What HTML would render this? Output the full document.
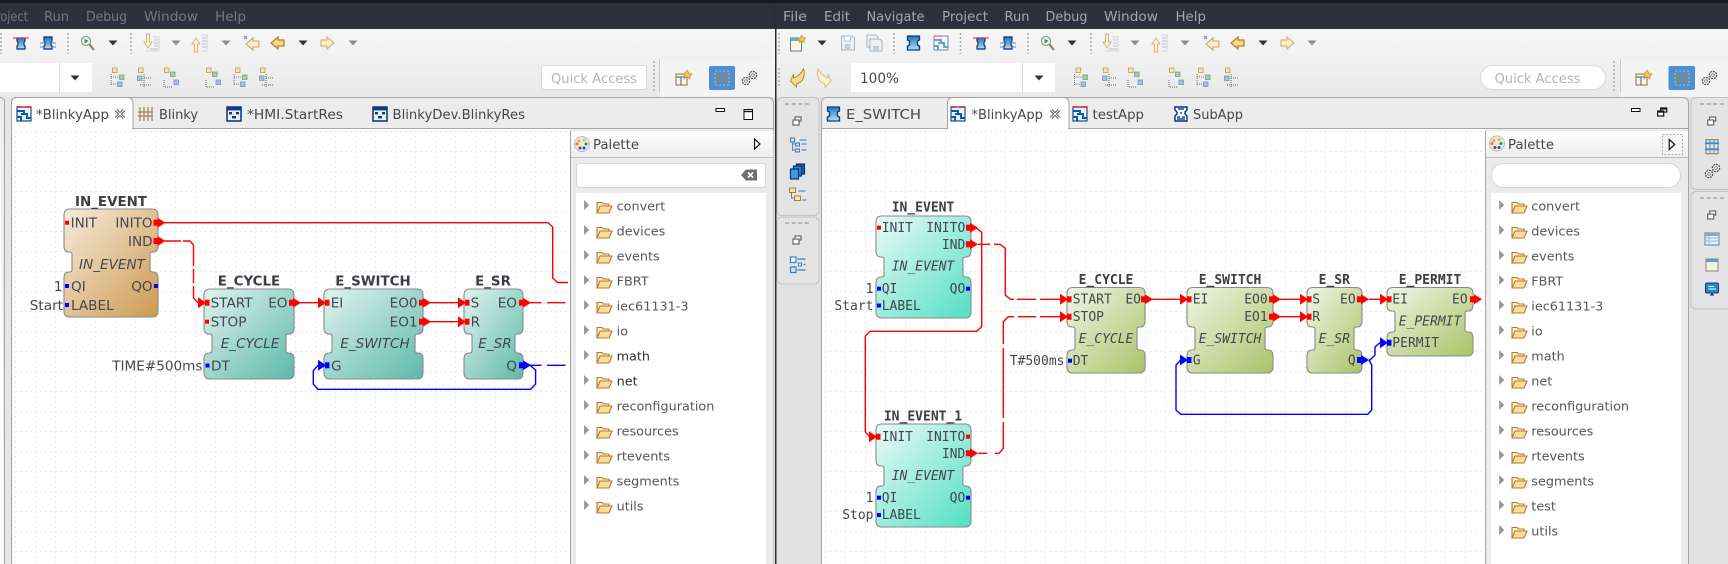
<!DOCTYPE html>
<html><head><meta charset="utf-8"><title>4diac IDE</title>
<style>
html,body{margin:0;padding:0;background:#e2e2e2;width:1728px;height:564px;overflow:hidden}
svg{display:block}
text{font-family:"DejaVu Sans","Liberation Sans",sans-serif}
.menu{font-size:13.3px;fill:#a4a6ab}
.menuL{font-size:13.3px;fill:#75787f}
.tab{font-size:13px;fill:#44474c}
.qa{font-size:13.3px;fill:#b1b4b8}
.pal{font-size:12.8px;fill:#54575c}
.palb{font-size:12.8px;fill:#303236}
.d{font-size:13.6px;fill:#45474e}
.di{font-size:13.6px;fill:#45474e;font-style:italic}
.dt{font-size:13.4px;fill:#3c3e45;font-weight:bold}
.m{font-family:"DejaVu Sans Mono","Liberation Mono",monospace;font-size:13px;fill:#45474e}
.mi{font-family:"DejaVu Sans Mono","Liberation Mono",monospace;font-size:13px;fill:#45474e;font-style:italic}
.mt{font-family:"DejaVu Sans Mono","Liberation Mono",monospace;font-size:13px;fill:#3c3e45;font-weight:bold}
</style></head><body>
<svg width="1728" height="564" viewBox="0 0 1728 564" xmlns="http://www.w3.org/2000/svg">
<defs>
<linearGradient id="tb" x1="0" y1="0" x2="0" y2="1"><stop offset="0" stop-color="#f6f6f6"/><stop offset="1" stop-color="#e9e9e9"/></linearGradient>
<linearGradient id="ph" x1="0" y1="0" x2="0" y2="1"><stop offset="0" stop-color="#ffffff"/><stop offset="1" stop-color="#eeeeee"/></linearGradient>
<linearGradient id="gOr" x1="0" y1="0" x2="1" y2="1"><stop offset="0" stop-color="#f6ebdd"/><stop offset="1" stop-color="#cd9a50"/></linearGradient>
<linearGradient id="gTe" x1="0" y1="0" x2="1" y2="1"><stop offset="0" stop-color="#e2f3ef"/><stop offset="1" stop-color="#5cb9a9"/></linearGradient>
<linearGradient id="gAq" x1="0" y1="0" x2="1" y2="1"><stop offset="0" stop-color="#eafaf6"/><stop offset="1" stop-color="#52dfc3"/></linearGradient>
<linearGradient id="gOl" x1="0" y1="0" x2="1" y2="1"><stop offset="0" stop-color="#f1f4e7"/><stop offset="1" stop-color="#a9c467"/></linearGradient>
<linearGradient id="gB" x1="0" y1="0" x2="0" y2="1"><stop offset="0" stop-color="#1f78c4"/><stop offset="1" stop-color="#b9dcf4"/></linearGradient>
<pattern id="gridL" x="15" y="11" width="20" height="20" patternUnits="userSpaceOnUse"><path d="M0 .5H20M.5 0V20" stroke="#e6e6e6" stroke-width="1" stroke-dasharray="2 3" fill="none"/></pattern>
<pattern id="gridR" x="5" y="11" width="20" height="20" patternUnits="userSpaceOnUse"><path d="M0 .5H20M.5 0V20" stroke="#e6e6e6" stroke-width="1" stroke-dasharray="2 3" fill="none"/></pattern>

<g id="ao"><rect x="0" y="-3" width="5" height="6"/><path d="M4-5L12 0L4 5z"/></g>
<g id="ai"><path d="M0-5.5L8 0L0 5.5z"/><rect x="7" y="-3" width="4.5" height="6"/></g>

<g id="tri"><path d="M-2.5-5L2.5 0L-2.5 5z" fill="#93969a"/></g>
<g id="fld"><path d="M-7 6V-4.5H-2L-.5-3H5V-1" fill="#fbeecb" stroke="#b5782f" stroke-width="1.1"/><path d="M-7 6L-4-1H8L5 6z" fill="#f9dd9d" stroke="#b5782f" stroke-width="1.1"/></g>
<g id="ddk"><path d="M-4.5-2.5H4.5L0 2.5z" fill="#333"/></g>
<g id="ddg"><path d="M-4.5-2.5H4.5L0 2.5z" fill="#8b8d90"/></g>
<g id="fb"><path d="M-6-7H6V-3L4-2V2L6 3V7H-6V3L-4 2V-2L-6-3z" fill="url(#gB)" stroke="#0b3b78" stroke-width="1.3"/></g>
<g id="fb1"><path d="M-4-5H4V-2L3-1V2L4 3V6H-4V3L-3 2V-1L-4-2z" fill="url(#gB)" stroke="#0b2f72" stroke-width="1.2"/><path d="M-8-5H8" stroke="#e33" stroke-width="1.1"/></g>
<g id="fb2"><path d="M-4-6H4V-2L3-1V2L4 3V6H-4V3L-3 2V-1L-4-2z" fill="url(#gB)" stroke="#0b2f72" stroke-width="1.2"/><path d="M-8 0H-4M4 0H8M-8 4H-4M4 4H8" stroke="#2a8fdc" stroke-width="1.1"/></g>
<g id="app"><rect x="-7" y="-7" width="14" height="14" fill="#e8f2fa" stroke="#0b3b78" stroke-width="1.1"/><path d="M-7-3H0V0M-3 0H3V4H7M-7 3H-3V7" stroke="#0b5aa8" stroke-width="2" fill="none"/><path d="M-7.5-7H-2M1-7H7.5" stroke="#e11" stroke-width="1.6"/></g>
<g id="app2"><rect x="-7" y="-7" width="14" height="14" fill="#f1f6fb" stroke="#6b8fb5"/><path d="M-7-3H0V0M-3 0H3V4H7M-7 3H-3V7" stroke="#5d93c5" stroke-width="1.8" fill="none"/><path d="M-7-7H1" stroke="#e55" stroke-width="1.2"/></g>
<g id="sub"><path d="M-6-7H6V-4L4-2V0L6 2V7H-6V2L-4 0V-2L-6-4z" fill="#fff" stroke="#0b2f72" stroke-width="1.4"/><path d="M-3-5H3M-1-1H1M-4 3H-1M1 3H4M-4 5H4" stroke="#114a9b" stroke-width="1.6"/></g>
<g id="hmi"><rect x="-7" y="-7" width="14" height="14" fill="#e8f0f8" stroke="#0b2f72" stroke-width="1.5"/><rect x="-7" y="-7" width="14" height="3.4" fill="#123a80"/><rect x="-5" y="-2" width="3" height="2.4" fill="#123a80"/><rect x="2" y="-2" width="3" height="2.4" fill="#123a80"/><rect x="-2" y="2" width="4" height="2.4" fill="#123a80"/></g>
<g id="res"><path d="M-5-7V7M-1-7V7M3-7V7M7-7V7M-7-2H8M-7 2H8" stroke="#a58f72" stroke-width="1.4"/></g>
<g id="srch"><circle cx="-2" cy="-2" r="4.5" fill="#eef4ee" stroke="#8a8f94" stroke-width="1.1"/><path d="M-3.5-4.5L.5-2L-3.5.5z" fill="#2fa34a"/><path d="M1.5 1.5L6 7" stroke="#8c7a5d" stroke-width="2"/></g>
<g id="nxt"><path d="M-4.5-9H-1.5V-1H1L-3 5L-7-1H-4.5z" fill="#fbf0d4" stroke="#d2b37c"/><path d="M2-6H8V8H-5" fill="none" stroke="#cfd5dc"/><path d="M3-3H7M3 0H7M3 3H7M-1 6H7" stroke="#b9c2cb"/></g>
<g id="prv"><path d="M-4.5 9H-1.5V1H1L-3-5L-7 1H-4.5z" fill="#fbf0d4" stroke="#d2b37c"/><path d="M2-8H8V8H3" fill="none" stroke="#cfd5dc"/><path d="M3-5H7M3-2H7M3 1H7M3 4H7" stroke="#b9c2cb"/></g>
<g id="lft"><path d="M-7 0L0-6V-3H6V3H0V6z" fill="#f5d98a" stroke="#b5821a" stroke-width="1.2"/></g>
<g id="lft2"><path d="M-5 1L2-5V-2H8V4H2V7z" fill="#fbedc7" stroke="#c9a35f"/><path d="M-7-7L-4-4M-4-7L-7-4" stroke="#7a8ea3" stroke-width="1.2"/></g>
<g id="rgt"><path d="M7 0L0-6V-3H-6V3H0V6z" fill="#fbedc7" stroke="#d2b47a" stroke-width="1.2"/></g>
<g id="new"><rect x="-7" y="-5" width="11" height="13" fill="#fdf6d8" stroke="#5b7ea5"/><rect x="-7" y="-5" width="11" height="3" fill="#7aa6d2"/><path d="M4-8L5.5-5.5L8-5L6.5-3L7-.5L4-2L1.5-.5L2-3L.5-5L3-5.5z" fill="#f0c454" stroke="#b8892a" stroke-width=".6"/></g>
<g id="sav"><path d="M-6-7H5L7-5V7H-6z" fill="#eef2f7" stroke="#a3b4c6"/><rect x="-3" y="-7" width="6" height="5" fill="#fff" stroke="#b4c2d0"/><rect x="-3" y="1" width="6" height="6" fill="#c2cfdc"/></g>
<g id="sava"><path d="M-7-8H2L4-6V-4H-4V4H-7z" fill="#eef2f7" stroke="#a3b4c6"/><path d="M-4-4H6L8-2V8H-4z" fill="#eef2f7" stroke="#a3b4c6"/><rect x="-1" y="3" width="6" height="5" fill="#c2cfdc"/></g>
<g id="und"><path d="M6-9C8-3 6 4-1 6V9L-7 3L-4-4V0C0-1 3-4 6-9z" fill="#f7dc91" stroke="#b98a24"/></g>
<g id="red"><path d="M-6-9C-8-3-6 4 1 6V9L7 3L4-4V0C0-1-3-4-6-9z" fill="#fbf0d2" stroke="#d6bd85"/></g>
<g id="a1"><rect x="-5.5" y="-9" width="4.5" height="4.5" fill="#f5e6b8" stroke="#b89a55" stroke-width=".8"/><rect x="1.5" y="-2" width="4.5" height="4.5" fill="#aac9a6" stroke="#7fa07c" stroke-width=".8"/><rect x="-.5" y="5" width="4.5" height="4.5" fill="#a9bcdc" stroke="#7e93b9" stroke-width=".8"/><path d="M-7 0H0M-7 7H-2M-7-3V9" stroke="#777" stroke-dasharray="1 1"/></g>
<g id="a2"><rect x="-5.5" y="-9" width="4.5" height="4.5" fill="#f5e6b8" stroke="#b89a55" stroke-width=".8"/><rect x="-6.5" y="-1" width="4.5" height="4.5" fill="#a9bcdc" stroke="#7e93b9" stroke-width=".8"/><path d="M0 1H7M-4 8H7M0-3V10" stroke="#666" stroke-dasharray="1 1"/></g>
<g id="a3"><rect x="-6.5" y="-9" width="4.5" height="4.5" fill="#f5e6b8" stroke="#b89a55" stroke-width=".8"/><rect x="-.5" y="-5" width="4.5" height="4.5" fill="#aac9a6" stroke="#7fa07c" stroke-width=".8"/><rect x="3" y="3" width="4.5" height="4.5" fill="#a9bcdc" stroke="#7e93b9" stroke-width=".8"/><path d="M-7 3V10H2" stroke="#666" stroke-dasharray="1 1" fill="none"/></g>
<g id="persp"><rect x="-6" y="-4" width="11" height="11" fill="#fdf6e0" stroke="#8c6f3f"/><path d="M-6-1H5M-1-1V7" stroke="#4c7fb2" stroke-width="1.2"/><path d="M5-8L7-5L10-4L8-2L8 1L5-1L2 1L3-2L1-4L3-5z" fill="#f0c454" stroke="#b8892a" stroke-width=".6"/></g>
<g id="grn"><rect x="-7" y="-7" width="14" height="14" fill="none" stroke="#d8b46a" stroke-dasharray="2 2"/><path d="M-8-2H8M-8 2H8" stroke="#a8853f"/><path d="M-3-7V7M3-7V7" stroke="#a8853f" stroke-dasharray="2 1"/></g>
<g id="gear"><circle cx="-3" cy="3" r="3.6" fill="#fff" stroke="#555" stroke-width="1.4" stroke-dasharray="2 .8"/><circle cx="-3" cy="3" r="1.3" fill="#fff" stroke="#555" stroke-width=".7"/><circle cx="4" cy="-3" r="3.6" fill="#fff" stroke="#555" stroke-width="1.4" stroke-dasharray="2 .8"/><circle cx="4" cy="-3" r="1.3" fill="#fff" stroke="#555" stroke-width=".7"/></g>
<g id="rest"><rect x="-2" y="-4" width="6" height="4" fill="#fff" stroke="#666" stroke-width="1.2"/><rect x="-4" y="-1" width="6" height="5" fill="#fff" stroke="#666" stroke-width="1.2"/></g>
<g id="palI"><circle r="7.5" fill="#e6ecf2" stroke="#b4bcc6"/><circle cx="-3" cy="-3" r="1.5" fill="#f0b400"/><circle cx="2" cy="-4" r="1.5" fill="#d8c800"/><circle cx="4" cy="0" r="1.5" fill="#1c9a2e"/><circle cx="2" cy="4" r="1.5" fill="#1a50c8"/><circle cx="-2" cy="4" r="1.5" fill="#d02020"/><circle cx="-5" cy="0" r="1.5" fill="#f08000"/></g>
<g id="flyo"><path d="M-2.5-5L3 0L-2.5 5z" fill="#fff" stroke="#111" stroke-width="1.2"/></g>
<g id="d4"><path d="M0 0H26" stroke="#b5b5b5" stroke-width="2" stroke-dasharray="4 2.6"/></g>
<g id="cls"><path d="M-4-4L4 4M4-4L-4 4" stroke="#4c4c4c" stroke-width="3"/><path d="M-4-4L4 4M4-4L-4 4" stroke="#fff" stroke-width="1.2"/></g>
</defs>

<!-- base -->
<rect width="1728" height="564" fill="#e2e2e2"/>
<rect y="29" width="1728" height="68" fill="url(#tb)"/>
<rect width="1728" height="3" fill="#15181c"/>
<rect y="3" width="1728" height="26" fill="#2e313b"/>
<rect x="660" y="59" width="115" height="38" fill="#f4f4f4"/><path d="M659.5 59V92" stroke="#c9c9c9"/>
<rect x="1621" y="59" width="107" height="38" fill="#f4f4f4"/><path d="M1620.5 59V92" stroke="#c9c9c9"/>

<!-- menu -->
<text class="menuL" x="-4" y="21" textLength="32" lengthAdjust="spacingAndGlyphs">roject</text>
<text class="menuL" x="44" y="21" textLength="25" lengthAdjust="spacingAndGlyphs">Run</text>
<text class="menuL" x="86" y="21" textLength="41" lengthAdjust="spacingAndGlyphs">Debug</text>
<text class="menuL" x="144" y="21" textLength="54" lengthAdjust="spacingAndGlyphs">Window</text>
<text class="menuL" x="215" y="21" textLength="31" lengthAdjust="spacingAndGlyphs">Help</text>
<text class="menu" x="783" y="21" textLength="24" lengthAdjust="spacingAndGlyphs">File</text>
<text class="menu" x="824" y="21" textLength="26" lengthAdjust="spacingAndGlyphs">Edit</text>
<text class="menu" x="866.5" y="21" textLength="58" lengthAdjust="spacingAndGlyphs">Navigate</text>
<text class="menu" x="942" y="21" textLength="46" lengthAdjust="spacingAndGlyphs">Project</text>
<text class="menu" x="1004.5" y="21" textLength="25" lengthAdjust="spacingAndGlyphs">Run</text>
<text class="menu" x="1045.5" y="21" textLength="42" lengthAdjust="spacingAndGlyphs">Debug</text>
<text class="menu" x="1104" y="21" textLength="54" lengthAdjust="spacingAndGlyphs">Window</text>
<text class="menu" x="1175.5" y="21" textLength="30.5" lengthAdjust="spacingAndGlyphs">Help</text>

<!-- separators -->
<g stroke="#a9a9a9" stroke-width="1.5" stroke-dasharray="2 2" fill="none">
<path d="M1 33V54M68 33V54M131 33V54M779 33V54M894 33V54M960.5 33V54M1028 33V54M1091 33V54M654 61V92M779 68V88M1614 61V92"/>
</g>

<!-- left toolbar -->
<use href="#fb1" x="21" y="43"/><use href="#fb2" x="48" y="43"/>
<use href="#srch" x="88" y="43"/><use href="#ddk" x="113" y="43"/>
<use href="#nxt" x="151" y="43"/><use href="#ddg" x="176" y="43"/>
<use href="#prv" x="199" y="43"/><use href="#ddg" x="226" y="43"/>
<use href="#lft2" x="251" y="43"/><use href="#lft" x="278" y="43"/><use href="#ddk" x="303" y="43"/>
<use href="#rgt" x="327" y="43"/><use href="#ddg" x="353" y="43"/>
<rect x="0" y="63" width="92" height="29" fill="#fff"/><path d="M59.5 63V92" stroke="#d5dbe2"/><use href="#ddk" x="75" y="78"/>
<use href="#a1" x="118" y="77"/><use href="#a2" x="144" y="77"/><use href="#a3" x="171" y="77"/>
<use href="#a3" x="213" y="77"/><use href="#a1" x="241" y="77"/><use href="#a2" x="266" y="77"/>
<rect x="541.5" y="65.5" width="105" height="24" rx="3" fill="#fff" stroke="#d3d8e3"/>
<text class="qa" x="551" y="83" textLength="86" lengthAdjust="spacingAndGlyphs">Quick Access</text>
<use href="#persp" x="682" y="78"/>
<rect x="709" y="66" width="26" height="24" rx="2" fill="#4a90d9"/><use href="#grn" x="722" y="78"/>
<use href="#gear" x="749" y="78"/>

<!-- right toolbar -->
<use href="#new" x="797.5" y="43"/><use href="#ddk" x="822" y="43"/>
<use href="#sav" x="847.5" y="43"/><use href="#sava" x="874" y="43"/>
<use href="#fb" x="913.5" y="43"/><use href="#app2" x="941" y="43"/>
<use href="#fb1" x="981" y="43"/><use href="#fb2" x="1008" y="43"/>
<use href="#srch" x="1048" y="43"/><use href="#ddk" x="1072" y="43"/>
<use href="#nxt" x="1110" y="43"/><use href="#ddg" x="1135" y="43"/>
<use href="#prv" x="1159" y="43"/><use href="#ddg" x="1185" y="43"/>
<use href="#lft2" x="1211" y="43"/><use href="#lft" x="1238" y="43"/><use href="#ddk" x="1263" y="43"/>
<use href="#rgt" x="1287" y="43"/><use href="#ddg" x="1312" y="43"/>
<use href="#und" x="797.5" y="78"/><use href="#red" x="824" y="78"/>
<rect x="851" y="63" width="204" height="29" fill="#fff"/><path d="M1022.5 63V92" stroke="#d5dbe2"/><use href="#ddk" x="1039" y="78"/>
<text class="tab" x="860" y="83" textLength="39" lengthAdjust="spacingAndGlyphs" style="font-size:14px">100%</text>
<use href="#a1" x="1081.5" y="77"/><use href="#a2" x="1109" y="77"/><use href="#a3" x="1135" y="77"/>
<use href="#a3" x="1176" y="77"/><use href="#a1" x="1204" y="77"/><use href="#a2" x="1231" y="77"/>
<rect x="1480.5" y="65.5" width="125" height="24" rx="12" fill="#fff" stroke="#d3d8e3"/>
<text class="qa" x="1494.5" y="83" textLength="86" lengthAdjust="spacingAndGlyphs">Quick Access</text>
<use href="#persp" x="1642" y="78"/>
<rect x="1668.5" y="66" width="26.5" height="24" rx="2" fill="#4a90d9"/><use href="#grn" x="1682" y="78"/>
<use href="#gear" x="1709" y="78"/>

<!-- left window frame -->
<rect x="0" y="97" width="4.5" height="467" fill="#fff"/>
<path d="M0 97.5H0.5Q4.5 97.5 4.5 103V564" fill="#ededed" stroke="#a5a5a5"/>
<rect x="5" y="97" width="6" height="467" fill="#e6e6e6"/>
<path d="M11.5 564V103.5q0-6 6-6H767.5q6 0 6 6V564z" fill="#ececec" stroke="#a5a5a5"/>
<rect x="12" y="129" width="559" height="435" fill="#fff"/>
<rect x="12" y="129" width="559" height="435" fill="url(#gridL)"/>
<path d="M12 128.5H773" stroke="#a8a8a8"/>
<path d="M11.5 129V103.5q0-6 6-6H127q6 0 6 6V129z" fill="#fff" stroke="#a5a5a5"/>
<path d="M12 129H132" stroke="#fff" stroke-width="2"/>
<use href="#app" x="24" y="114"/>
<text class="tab" x="36" y="119" textLength="73" lengthAdjust="spacingAndGlyphs">*BlinkyApp</text>
<use href="#cls" x="120" y="114"/>
<use href="#res" x="145" y="114"/>
<text class="tab" x="159" y="119" textLength="39" lengthAdjust="spacingAndGlyphs">Blinky</text>
<use href="#hmi" x="234" y="114"/>
<text class="tab" x="247" y="119" textLength="96" lengthAdjust="spacingAndGlyphs">*HMI.StartRes</text>
<use href="#hmi" x="380" y="114"/>
<text class="tab" x="392.5" y="119" textLength="132.5" lengthAdjust="spacingAndGlyphs">BlinkyDev.BlinkyRes</text>
<rect x="716" y="108.5" width="8.5" height="3" fill="#fff" stroke="#111"/>
<rect x="744" y="109.5" width="8.5" height="10" fill="#fff" stroke="#111"/><path d="M744 111.5H752.5" stroke="#111" stroke-width="1.4"/>

<!-- left diagram wires -->
<g fill="none" stroke-width="1.4">
<path d="M165 222.7H548L552.7 227V278L557.5 282.5H568" stroke="#f00"/>
<path d="M165 241H181M183 241H190L193.5 245V266M193.5 269V283M193.5 286V298L198 302.7" stroke="#f00"/>
<path d="M300 302.7H320M430 302.7H460M430 321.7H460" stroke="#f00"/>
<path d="M530 302.7H541.5M547 302.7H565.5" stroke="#f00"/>
<path d="M530 365.3H541.5M547 365.3H565.5" stroke="#00f"/>
<path d="M530 365.3L535.6 370V384L530.6 389.3H318L313.3 384V370.6L318 365.3" stroke="#00f"/>
</g>

<!-- left blocks -->
<g stroke="#8a8a8a" stroke-width="1.1">
<path fill="url(#gOr)" d="M70 209H152q6 0 6 6V246q0 6-5 6q-3 0-3 2V270q0 2 3 2q5 0 5 6V311q0 6-6 6H70q-6 0-6-6V278q0-6 5-6q3 0 3-2V254q0-2-3-2q-5 0-5-6V215q0-6 6-6z"/>
<path fill="url(#gTe)" d="M210 289H288q6 0 6 6V328q0 6-5 6q-3 0-3 2V351q0 2 3 2q5 0 5 6V373q0 6-6 6H210q-6 0-6-6V359q0-6 5-6q3 0 3-2V336q0-2-3-2q-5 0-5-6V295q0-6 6-6z"/>
<path fill="url(#gTe)" d="M330 289H417q6 0 6 6V328q0 6-5 6q-3 0-3 2V351q0 2 3 2q5 0 5 6V373q0 6-6 6H330q-6 0-6-6V359q0-6 5-6q3 0 3-2V336q0-2-3-2q-5 0-5-6V295q0-6 6-6z"/>
<path fill="url(#gTe)" d="M470 289H517q6 0 6 6V328q0 6-5 6q-3 0-3 2V351q0 2 3 2q5 0 5 6V373q0 6-6 6H470q-6 0-6-6V359q0-6 5-6q3 0 3-2V336q0-2-3-2q-5 0-5-6V295q0-6 6-6z"/>
</g>

<!-- left block text -->
<text class="dt" x="111" y="206" text-anchor="middle">IN_EVENT</text>
<text class="d" x="70.6" y="227.5">INIT</text>
<text class="d" x="152.6" y="227.5" text-anchor="end">INITO</text>
<text class="d" x="152.6" y="246" text-anchor="end">IND</text>
<text class="di" x="112" y="269" text-anchor="middle">IN_EVENT</text>
<text class="d" x="71" y="291">QI</text>
<text class="d" x="152.6" y="291" text-anchor="end">QO</text>
<text class="d" x="71" y="310">LABEL</text>
<text class="d" x="62.5" y="291" text-anchor="end">1</text>
<text class="d" x="63" y="310" text-anchor="end">Start</text>

<text class="dt" x="249" y="285.5" text-anchor="middle">E_CYCLE</text>
<text class="d" x="210.6" y="307.5">START</text>
<text class="d" x="287.5" y="307.5" text-anchor="end">EO</text>
<text class="d" x="210.6" y="326.5">STOP</text>
<text class="di" x="250" y="348" text-anchor="middle">E_CYCLE</text>
<text class="d" x="211" y="370.5">DT</text>
<text class="d" x="202.5" y="370.5" text-anchor="end">TIME#500ms</text>

<text class="dt" x="373" y="285.5" text-anchor="middle">E_SWITCH</text>
<text class="d" x="330.7" y="307.5">EI</text>
<text class="d" x="417.6" y="307.5" text-anchor="end">EO0</text>
<text class="d" x="417.6" y="326.5" text-anchor="end">EO1</text>
<text class="di" x="375" y="348" text-anchor="middle">E_SWITCH</text>
<text class="d" x="331" y="370.5">G</text>

<text class="dt" x="493" y="285.5" text-anchor="middle">E_SR</text>
<text class="d" x="470.6" y="307.5">S</text>
<text class="d" x="470.6" y="326.5">R</text>
<text class="d" x="517" y="307.5" text-anchor="end">EO</text>
<text class="di" x="495" y="348" text-anchor="middle">E_SR</text>
<text class="d" x="517" y="370.5" text-anchor="end">Q</text>

<!-- left ports -->
<g fill="#f00">
<rect x="65" y="220.7" width="4" height="4"/>
<rect x="205" y="319.7" width="4" height="4"/>
<use href="#ao" x="153.5" y="222.7"/><use href="#ao" x="153.5" y="241"/>
<use href="#ai" x="198" y="302.7"/><use href="#ao" x="289" y="302.7"/>
<use href="#ai" x="318" y="302.7"/><use href="#ao" x="419" y="302.7"/><use href="#ao" x="419" y="321.7"/>
<use href="#ai" x="458" y="302.7"/><use href="#ai" x="458" y="321.7"/>
<use href="#ao" x="519" y="302.7"/>
</g>
<g fill="#00f">
<rect x="65" y="284" width="4" height="4"/><rect x="65" y="303" width="4" height="4"/><rect x="154" y="284" width="4" height="4"/>
<rect x="205.5" y="363.5" width="4" height="4"/>
<use href="#ai" x="318" y="365.3"/><use href="#ao" x="519" y="365.3"/>
</g>

<!-- left palette -->
<rect x="570.5" y="130.5" width="203" height="434" fill="#ebebeb"/>
<rect x="571" y="131" width="202" height="26" fill="url(#ph)"/>
<path d="M570.5 130.5V564" stroke="#a5a5a5" fill="none"/><path d="M571 157.5H773" stroke="#bdbdbd"/>
<use href="#palI" x="582" y="144"/>
<text class="tab" x="593" y="149" textLength="46" lengthAdjust="spacingAndGlyphs">Palette</text>
<use href="#flyo" x="757" y="144"/>
<rect x="576.5" y="163.5" width="189" height="24" rx="3" fill="#fff" stroke="#d3d8e3"/>
<path d="M741 175L746 169.5H757V180.5H746z" fill="#6d6f72"/><path d="M748 172.5L753 177.5M753 172.5L748 177.5" stroke="#fff" stroke-width="1.6"/>
<rect x="576" y="193" width="190" height="371" fill="#fff"/>
<g>
<use href="#tri" x="586.6" y="205"/><use href="#fld" x="604" y="207"/><text class="pal" x="616.6" y="210.7">convert</text>
<use href="#tri" x="586.6" y="230"/><use href="#fld" x="604" y="232"/><text class="pal" x="616.6" y="235.7">devices</text>
<use href="#tri" x="586.6" y="255"/><use href="#fld" x="604" y="257"/><text class="pal" x="616.6" y="260.7">events</text>
<use href="#tri" x="586.6" y="280"/><use href="#fld" x="604" y="282"/><text class="pal" x="616.6" y="285.7">FBRT</text>
<use href="#tri" x="586.6" y="305"/><use href="#fld" x="604" y="307"/><text class="pal" x="616.6" y="310.7">iec61131-3</text>
<use href="#tri" x="586.6" y="330"/><use href="#fld" x="604" y="332"/><text class="pal" x="616.6" y="335.7">io</text>
<use href="#tri" x="586.6" y="355"/><use href="#fld" x="604" y="357"/><text class="palb" x="616.6" y="360.7">math</text>
<use href="#tri" x="586.6" y="380"/><use href="#fld" x="604" y="382"/><text class="palb" x="616.6" y="385.7">net</text>
<use href="#tri" x="586.6" y="405"/><use href="#fld" x="604" y="407"/><text class="pal" x="616.6" y="410.7">reconfiguration</text>
<use href="#tri" x="586.6" y="430"/><use href="#fld" x="604" y="432"/><text class="pal" x="616.6" y="435.7">resources</text>
<use href="#tri" x="586.6" y="455"/><use href="#fld" x="604" y="457"/><text class="pal" x="616.6" y="460.7">rtevents</text>
<use href="#tri" x="586.6" y="480"/><use href="#fld" x="604" y="482"/><text class="pal" x="616.6" y="485.7">segments</text>
<use href="#tri" x="586.6" y="505"/><use href="#fld" x="604" y="507"/><text class="pal" x="616.6" y="510.7">utils</text>
</g>

<!-- window divider -->
<rect x="775" y="3" width="1.5" height="561" fill="#2b2d33"/>
<rect x="776.5" y="97" width="45" height="467" fill="#e2e2e2"/>

<!-- middle trim -->
<rect x="777" y="97.5" width="42" height="118" rx="5" fill="#e4e4e4" stroke="#c2c2c2"/>
<rect x="777" y="217" width="42" height="67" rx="5" fill="#e4e4e4" stroke="#c2c2c2"/>
<use href="#d4" x="785" y="104"/><use href="#d4" x="785" y="223"/>
<use href="#rest" x="797" y="121"/><use href="#rest" x="797" y="240"/>
<g transform="translate(797.5 146)"><path d="M-5-6V5M-5-2H-1M-5 4H-1" stroke="#5a87b8" fill="none"/><rect x="-7" y="-8" width="4" height="4" fill="#cfe0f0" stroke="#3d78b5"/><rect x="-2" y="-3" width="4" height="3" fill="#cfe0f0" stroke="#3d78b5"/><rect x="-2" y="3" width="4" height="3" fill="#cfe0f0" stroke="#3d78b5"/><path d="M2-6H9M4-2H9M4 4H9" stroke="#3d78b5"/></g>
<g transform="translate(797.5 171)"><rect x="-1" y="-7" width="8" height="10" fill="#1568b5" stroke="#0b2f72" stroke-width="1.2"/><rect x="-4" y="-5" width="8" height="10" fill="#2b86cf" stroke="#0b2f72" stroke-width="1.2"/><rect x="-7" y="-2" width="8" height="10" fill="#3f9be0" stroke="#0b2f72" stroke-width="1.2"/></g>
<g transform="translate(797.5 195)"><rect x="-8" y="-7" width="6" height="4.5" fill="#f5e4b4" stroke="#b5782f"/><rect x="-3" y="1" width="6" height="4.5" fill="#f5e4b4" stroke="#b5782f"/><path d="M-6-2V3H-3" stroke="#777" fill="none"/><path d="M1-4H8M5 5H9" stroke="#4a8ccc" stroke-width="1.2"/></g>
<g transform="translate(797.5 265)"><rect x="-7" y="-8" width="5.5" height="5.5" fill="#fff" stroke="#2f7fc8" stroke-width="1.2"/><rect x="-7" y="2" width="5.5" height="5.5" fill="#cfe3f5" stroke="#2f7fc8" stroke-width="1.2"/><rect x="1" y="-2" width="3" height="3" fill="#fff" stroke="#2f7fc8"/><path d="M0-6H8M6-.5H8M0 5H8" stroke="#2f7fc8" stroke-width="1.2"/></g>

<!-- right editor frame -->
<path d="M821.5 564V103.5q0-6 6-6H1682.5q6 0 6 6V564z" fill="#ececec" stroke="#a5a5a5"/>
<rect x="822" y="129" width="664" height="435" fill="#fff"/>
<rect x="822" y="129" width="664" height="435" fill="url(#gridR)"/>
<path d="M822 128.5H1688" stroke="#a8a8a8"/>
<path d="M947.5 129V103.5q0-6 6-6H1063q6 0 6 6V129z" fill="#fff" stroke="#a5a5a5"/>
<path d="M948 129H1068" stroke="#fff" stroke-width="2"/>
<use href="#fb" x="833.5" y="114"/>
<text class="tab" x="846" y="119" textLength="75" lengthAdjust="spacingAndGlyphs">E_SWITCH</text>
<use href="#app" x="958" y="114"/>
<text class="tab" x="971.5" y="119" textLength="71.5" lengthAdjust="spacingAndGlyphs">*BlinkyApp</text>
<use href="#cls" x="1055" y="114"/>
<use href="#app" x="1080" y="114"/>
<text class="tab" x="1092.5" y="119" textLength="51.5" lengthAdjust="spacingAndGlyphs">testApp</text>
<use href="#sub" x="1181" y="114"/>
<text class="tab" x="1193" y="119" textLength="50" lengthAdjust="spacingAndGlyphs">SubApp</text>
<rect x="1631.5" y="108.5" width="8.5" height="3" fill="#fff" stroke="#111"/>
<g transform="translate(1661.7 112)"><rect x="-1" y="-4" width="6" height="4" fill="#fff" stroke="#111" stroke-width="1.2"/><rect x="-4" y="-1" width="6" height="5" fill="#fff" stroke="#111" stroke-width="1.2"/><path d="M-4 0H2M-1-3H5" stroke="#111" stroke-width="1.2"/></g>

<!-- right wires -->
<g fill="none" stroke-width="1.4">
<path d="M976 227.7L981.7 232.3V326.7L976.7 331.3H870L865.3 336V431.7L869.5 436.7" stroke="#f00"/>
<path d="M978 244.3H990M994 244.3H1000L1005.3 248.3V295L1010.7 299.3H1014M1017 299.3H1036M1040 299.3H1062" stroke="#f00"/>
<path d="M978 453.3H987M995 453.3H999L1003.3 448.5V422M1003.3 418V348M1003.3 344V321.7L1008.3 316.7H1014M1018 316.7H1036M1040 316.7H1062" stroke="#f00"/>
<path d="M1152 299.3H1182M1280 299.3H1302M1280 316.7H1302M1369 299.3H1382" stroke="#f00"/>
<path d="M1369 360H1370L1375 355V347L1380 342.7" stroke="#00f"/>
<path d="M1369 360L1371.7 365V410L1367.7 414.3H1180.7L1176 410V365L1180.7 360" stroke="#00f"/>
</g>

<!-- right blocks -->
<g stroke="#8a8a8a" stroke-width="1.1">
<path fill="url(#gAq)" d="M882 216H965q6 0 6 6V251q0 6-5 6q-3 0-3 2V275q0 2 3 2q5 0 5 6V312q0 6-6 6H882q-6 0-6-6V283q0-6 5-6q3 0 3-2V259q0-2-3-2q-5 0-5-6V222q0-6 6-6z"/>
<path fill="url(#gAq)" d="M882 424H965q6 0 6 6V460q0 6-5 6q-3 0-3 2V484q0 2 3 2q5 0 5 6V521q0 6-6 6H882q-6 0-6-6V492q0-6 5-6q3 0 3-2V468q0-2-3-2q-5 0-5-6V430q0-6 6-6z"/>
<path fill="url(#gOl)" d="M1073 287.5H1139q6 0 6 6V321q0 6-5 6q-3 0-3 2V348q0 2 3 2q5 0 5 6V367q0 6-6 6H1073q-6 0-6-6V356q0-6 5-6q3 0 3-2V329q0-2-3-2q-5 0-5-6V293.5q0-6 6-6z"/>
<path fill="url(#gOl)" d="M1193 287.5H1267q6 0 6 6V321q0 6-5 6q-3 0-3 2V348q0 2 3 2q5 0 5 6V367q0 6-6 6H1193q-6 0-6-6V356q0-6 5-6q3 0 3-2V329q0-2-3-2q-5 0-5-6V293.5q0-6 6-6z"/>
<path fill="url(#gOl)" d="M1313 287.5H1356q6 0 6 6V321q0 6-5 6q-3 0-3 2V348q0 2 3 2q5 0 5 6V367q0 6-6 6H1313q-6 0-6-6V356q0-6 5-6q3 0 3-2V329q0-2-3-2q-5 0-5-6V293.5q0-6 6-6z"/>
<path fill="url(#gOl)" d="M1393 287.5H1467q6 0 6 6V305q0 6-5 6q-3 0-3 2V330q0 2 3 2q5 0 5 6V350q0 6-6 6H1393q-6 0-6-6V338q0-6 5-6q3 0 3-2V313q0-2-3-2q-5 0-5-6V293.5q0-6 6-6z"/>
</g>

<!-- right text -->
<text class="mt" x="923" y="211.5" text-anchor="middle">IN_EVENT</text>
<text class="m" x="881.7" y="232">INIT</text>
<text class="m" x="965.3" y="232" text-anchor="end">INITO</text>
<text class="m" x="965.3" y="249" text-anchor="end">IND</text>
<text class="mi" x="923" y="270.5" text-anchor="middle">IN_EVENT</text>
<text class="m" x="881.7" y="293">QI</text>
<text class="m" x="965.3" y="293" text-anchor="end">QO</text>
<text class="m" x="881.7" y="310">LABEL</text>
<text class="m" x="873.5" y="293" text-anchor="end">1</text>
<text class="m" x="873.5" y="310" text-anchor="end">Start</text>

<text class="mt" x="923" y="420.5" text-anchor="middle">IN_EVENT_1</text>
<text class="m" x="881.7" y="441">INIT</text>
<text class="m" x="965.3" y="441" text-anchor="end">INITO</text>
<text class="m" x="965.3" y="458" text-anchor="end">IND</text>
<text class="mi" x="923" y="480" text-anchor="middle">IN_EVENT</text>
<text class="m" x="881.7" y="502">QI</text>
<text class="m" x="965.3" y="502" text-anchor="end">QO</text>
<text class="m" x="881.7" y="519">LABEL</text>
<text class="m" x="873.5" y="502" text-anchor="end">1</text>
<text class="m" x="873.5" y="519" text-anchor="end">Stop</text>

<text class="mt" x="1106" y="284" text-anchor="middle">E_CYCLE</text>
<text class="m" x="1072.7" y="303.7">START</text>
<text class="m" x="1141" y="303.7" text-anchor="end">EO</text>
<text class="m" x="1072.7" y="321">STOP</text>
<text class="mi" x="1106" y="343" text-anchor="middle">E_CYCLE</text>
<text class="m" x="1072.7" y="365">DT</text>
<text class="m" x="1064.5" y="365" text-anchor="end">T#500ms</text>

<text class="mt" x="1230" y="284" text-anchor="middle">E_SWITCH</text>
<text class="m" x="1192.7" y="303.7">EI</text>
<text class="m" x="1267.7" y="303.7" text-anchor="end">EO0</text>
<text class="m" x="1267.7" y="321" text-anchor="end">EO1</text>
<text class="mi" x="1230" y="343" text-anchor="middle">E_SWITCH</text>
<text class="m" x="1192.7" y="364.5">G</text>

<text class="mt" x="1334.3" y="284" text-anchor="middle">E_SR</text>
<text class="m" x="1312.3" y="303.7">S</text>
<text class="m" x="1312.3" y="321">R</text>
<text class="m" x="1355.7" y="303.7" text-anchor="end">EO</text>
<text class="mi" x="1334.3" y="343" text-anchor="middle">E_SR</text>
<text class="m" x="1355.7" y="364.5" text-anchor="end">Q</text>

<text class="mt" x="1430" y="284" text-anchor="middle">E_PERMIT</text>
<text class="m" x="1392.3" y="303.7">EI</text>
<text class="m" x="1467.7" y="303.7" text-anchor="end">EO</text>
<text class="mi" x="1430" y="325.7" text-anchor="middle">E_PERMIT</text>
<text class="m" x="1392.3" y="347">PERMIT</text>

<!-- right ports -->
<g fill="#f00">
<rect x="877" y="225.7" width="4" height="4"/><rect x="966" y="434.7" width="4" height="4"/>
<use href="#ao" x="966" y="227.7"/><use href="#ao" x="966" y="244.3"/><use href="#ao" x="966" y="453.3"/>
<use href="#ai" x="869" y="436.7"/>
<use href="#ai" x="1060" y="299.3"/><use href="#ai" x="1060" y="316.7"/>
<use href="#ao" x="1141" y="299.3"/><use href="#ai" x="1180" y="299.3"/>
<use href="#ao" x="1269" y="299.3"/><use href="#ao" x="1269" y="316.7"/>
<use href="#ai" x="1300" y="299.3"/><use href="#ai" x="1300" y="316.7"/>
<use href="#ao" x="1357" y="299.3"/><use href="#ai" x="1380" y="299.3"/>
<use href="#ao" x="1470" y="299.3"/>
</g>
<g fill="#00f">
<rect x="877" y="286.7" width="4" height="4"/><rect x="877" y="303.5" width="4" height="4"/><rect x="966" y="286.7" width="4" height="4"/>
<rect x="877" y="495.7" width="4" height="4"/><rect x="877" y="513" width="4" height="4"/><rect x="966" y="495.7" width="4" height="4"/>
<rect x="1068" y="358.7" width="4" height="4"/>
<use href="#ai" x="1180" y="360"/><use href="#ao" x="1357" y="360"/><use href="#ai" x="1380" y="342.7"/>
</g>

<!-- right palette -->
<rect x="1485.5" y="130.5" width="202.5" height="434" fill="#ebebeb"/>
<rect x="1486" y="131" width="202" height="26" fill="url(#ph)"/>
<path d="M1485.5 130.5V564" stroke="#a5a5a5" fill="none"/><path d="M1486 157.5H1688" stroke="#bdbdbd"/>
<use href="#palI" x="1497" y="143.5"/>
<text class="tab" x="1508" y="149" textLength="46" lengthAdjust="spacingAndGlyphs">Palette</text>
<rect x="1662.5" y="134.5" width="20" height="20" fill="#f6f6f6" stroke="#aaa" stroke-dasharray="2 1.5"/>
<use href="#flyo" x="1671.7" y="144.5"/>
<rect x="1491.5" y="163.5" width="189" height="24" rx="12" fill="#fff" stroke="#d3d8e3"/>
<rect x="1491" y="193" width="190" height="371" fill="#fff"/>
<g>
<use href="#tri" x="1501.7" y="205"/><use href="#fld" x="1519" y="207"/><text class="pal" x="1531.3" y="210.7">convert</text>
<use href="#tri" x="1501.7" y="230"/><use href="#fld" x="1519" y="232"/><text class="pal" x="1531.3" y="235.7">devices</text>
<use href="#tri" x="1501.7" y="255"/><use href="#fld" x="1519" y="257"/><text class="pal" x="1531.3" y="260.7">events</text>
<use href="#tri" x="1501.7" y="280"/><use href="#fld" x="1519" y="282"/><text class="pal" x="1531.3" y="285.7">FBRT</text>
<use href="#tri" x="1501.7" y="305"/><use href="#fld" x="1519" y="307"/><text class="pal" x="1531.3" y="310.7">iec61131-3</text>
<use href="#tri" x="1501.7" y="330"/><use href="#fld" x="1519" y="332"/><text class="pal" x="1531.3" y="335.7">io</text>
<use href="#tri" x="1501.7" y="355"/><use href="#fld" x="1519" y="357"/><text class="pal" x="1531.3" y="360.7">math</text>
<use href="#tri" x="1501.7" y="380"/><use href="#fld" x="1519" y="382"/><text class="pal" x="1531.3" y="385.7">net</text>
<use href="#tri" x="1501.7" y="405"/><use href="#fld" x="1519" y="407"/><text class="pal" x="1531.3" y="410.7">reconfiguration</text>
<use href="#tri" x="1501.7" y="430"/><use href="#fld" x="1519" y="432"/><text class="pal" x="1531.3" y="435.7">resources</text>
<use href="#tri" x="1501.7" y="455"/><use href="#fld" x="1519" y="457"/><text class="pal" x="1531.3" y="460.7">rtevents</text>
<use href="#tri" x="1501.7" y="480"/><use href="#fld" x="1519" y="482"/><text class="pal" x="1531.3" y="485.7">segments</text>
<use href="#tri" x="1501.7" y="505"/><use href="#fld" x="1519" y="507"/><text class="pal" x="1531.3" y="510.7">test</text>
<use href="#tri" x="1501.7" y="530"/><use href="#fld" x="1519" y="532"/><text class="pal" x="1531.3" y="535.7">utils</text>
</g>

<!-- right trim -->
<rect x="1689" y="97" width="39" height="467" fill="#e2e2e2"/>
<path d="M1688.5 103V564" stroke="#a5a5a5" fill="none"/>
<rect x="1691" y="97.5" width="45" height="92" rx="5" fill="#e4e4e4" stroke="#c2c2c2"/>
<rect x="1691" y="191.5" width="45" height="117.5" rx="5" fill="#e4e4e4" stroke="#c2c2c2"/>
<use href="#d4" x="1700" y="104"/><use href="#d4" x="1700" y="198"/>
<use href="#rest" x="1711.7" y="121"/><use href="#rest" x="1711.7" y="215"/>
<g transform="translate(1712 146.7)"><rect x="-6" y="-7" width="12" height="14" fill="none" stroke="#9b8363" stroke-width="1.2"/><path d="M-2-7V7M2-7V7" stroke="#9b8363"/><rect x="-7" y="-4.5" width="14" height="2" fill="#3d92d5"/><rect x="-7" y="1.5" width="14" height="2" fill="#3d92d5"/></g>
<use href="#gear" x="1712" y="171"/>
<g transform="translate(1712 239)"><rect x="-7" y="-6" width="14" height="12" fill="#e9eef5" stroke="#5c7fa8"/><rect x="-7" y="-6" width="14" height="3" fill="#8ba7c7"/><path d="M-7-1H7M-7 2H7M-3-3V6" stroke="#a5b7cb"/></g>
<g transform="translate(1712 265)"><rect x="-6" y="-6" width="12" height="12" fill="#f4f2e6" stroke="#9b8363"/><rect x="-6" y="-6" width="12" height="3" fill="#5b9ad2"/></g>
<g transform="translate(1712 289)"><rect x="-6.5" y="-6" width="13" height="10" rx="1.5" fill="#2b86cf" stroke="#0b3b78"/><path d="M-3.5-2.5H2M-3.5 0H4" stroke="#fff"/><path d="M-2 6H2M0 4V6" stroke="#0b3b78" stroke-width="1.2"/></g>
</svg>
</body></html>
